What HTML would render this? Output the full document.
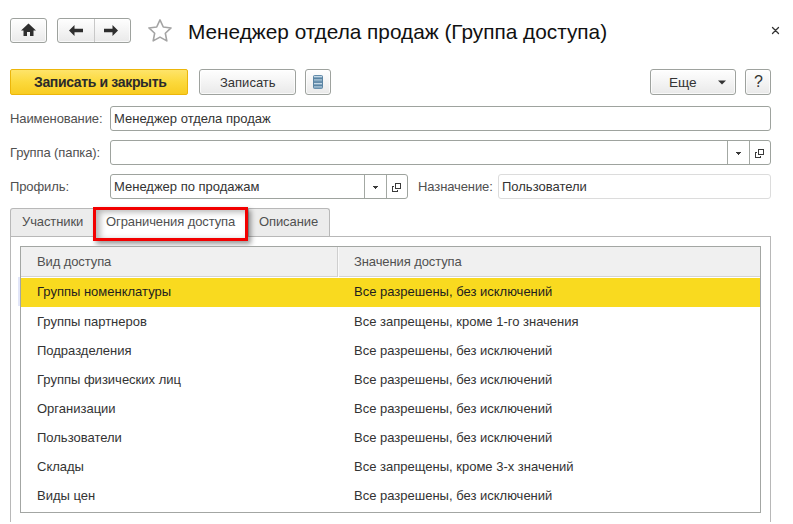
<!DOCTYPE html>
<html><head><meta charset="utf-8">
<style>
*{box-sizing:border-box;margin:0;padding:0}
html,body{width:793px;height:524px;overflow:hidden;background:#fff}
body{position:relative;font-family:"Liberation Sans",sans-serif;font-size:13px;color:#333}
.a{position:absolute}
.t{position:absolute;white-space:nowrap;line-height:15px}
.btn{position:absolute;border:1px solid #9ea29e;border-radius:3px;background:linear-gradient(#fefefe,#f4f4f4 50%,#e9e9e9);box-shadow:inset 0 0 0 1px rgba(255,255,255,.7)}
.inp{position:absolute;border:1px solid #9ea39e;border-radius:3px;background:#fff}
.lbl{color:#505050;letter-spacing:-0.1px}
.row{position:absolute;left:21px;width:739px;height:29px}
</style></head><body>

<!-- top nav -->
<div class="btn" style="left:10px;top:18px;width:37px;height:25px"></div>
<svg class="a" style="left:21px;top:23px" width="15" height="14" viewBox="0 0 15 14"><path d="M7.5 0.5 L15 7.5 L12.5 7.5 L12.5 13 L9 13 L9 9 L6 9 L6 13 L2.5 13 L2.5 7.5 L0 7.5 Z" fill="#2e2e2e"/></svg>

<div class="btn" style="left:57px;top:18px;width:74px;height:25px"></div>
<div class="a" style="left:94px;top:19px;width:1px;height:23px;background:#c8c8c8"></div>
<svg class="a" style="left:69px;top:25px" width="15" height="11" viewBox="0 0 15 11"><path d="M0 5.5 L5.5 0 L5.5 3.7 L14 3.7 L14 7.3 L5.5 7.3 L5.5 11 Z" fill="#2e2e2e"/></svg>
<svg class="a" style="left:104px;top:25px" width="15" height="11" viewBox="0 0 15 11"><path d="M14 5.5 L8.5 0 L8.5 3.7 L0 3.7 L0 7.3 L8.5 7.3 L8.5 11 Z" fill="#2e2e2e"/></svg>

<svg class="a" style="left:147px;top:19px" width="26" height="24" viewBox="0 0 26 24"><path d="M13.00 0.90 L16.29 7.97 L24.03 8.92 L18.33 14.23 L19.82 21.88 L13.00 18.10 L6.18 21.88 L7.67 14.23 L1.97 8.92 L9.71 7.97 Z" fill="none" stroke="#a4a4a4" stroke-width="1.6" stroke-linejoin="round"/></svg>

<div class="t" style="left:188px;top:20px;font-size:20.8px;line-height:24px;color:#111">Менеджер отдела продаж (Группа доступа)</div>

<svg class="a" style="left:770px;top:25px" width="11" height="11" viewBox="0 0 11 11"><path d="M2.5 2.5 L8.5 8.5 M8.5 2.5 L2.5 8.5" stroke="#333" stroke-width="1.3" stroke-linecap="round"/></svg>

<!-- command bar -->
<div class="a" style="left:10px;top:69px;width:178px;height:26px;border:1px solid #ecb60a;border-radius:2px;background:linear-gradient(#fee46a,#fcd93c 50%,#f8cc22)"></div>
<div class="t" style="left:34px;top:75px;font-weight:bold;font-size:14px;letter-spacing:-0.35px;color:#2b2b2b">Записать и закрыть</div>

<div class="btn" style="left:199px;top:69px;width:97px;height:26px"></div>
<div class="t" style="left:220px;top:75px;color:#333">Записать</div>

<div class="btn" style="left:305px;top:69px;width:26px;height:26px"></div>
<svg class="a" style="left:313px;top:75px" width="10" height="14" viewBox="0 0 10 14"><rect x="0" y="0" width="10" height="14" rx="2" fill="#5a84a3"/><rect x="1" y="0.90" width="8" height="1.1" fill="#c4d8e6"/><rect x="1" y="2.00" width="8" height="0.9" fill="#86a9c2"/><rect x="1" y="4.40" width="8" height="1.1" fill="#c4d8e6"/><rect x="1" y="5.50" width="8" height="0.9" fill="#86a9c2"/><rect x="1" y="7.90" width="8" height="1.1" fill="#c4d8e6"/><rect x="1" y="9.00" width="8" height="0.9" fill="#86a9c2"/><rect x="1" y="11.40" width="8" height="1.1" fill="#c4d8e6"/><rect x="1" y="12.50" width="8" height="0.9" fill="#86a9c2"/></svg>

<div class="btn" style="left:650px;top:69px;width:86px;height:26px"></div>
<div class="t" style="left:669px;top:75px;color:#333;font-size:13.6px">Еще</div>
<svg class="a" style="left:718px;top:80px" width="8" height="5" viewBox="0 0 8 5"><path d="M0 0.5 L8 0.5 L4 4.5 Z" fill="#333"/></svg>

<div class="btn" style="left:745px;top:69px;width:26px;height:26px"></div>
<div class="t" style="left:754px;top:74px;font-size:16px;color:#333">?</div>

<!-- fields -->
<div class="t lbl" style="left:10px;top:111px">Наименование:</div>
<div class="inp" style="left:110px;top:106px;width:661px;height:25px"></div>
<div class="t" style="left:114px;top:111px;color:#333">Менеджер отдела продаж</div>

<div class="t lbl" style="left:10px;top:145px">Группа (папка):</div>
<div class="inp" style="left:110px;top:140px;width:661px;height:25px"></div>
<div class="a" style="left:727px;top:141px;width:1px;height:23px;background:#a3a8a3"></div>
<div class="a" style="left:749px;top:141px;width:1px;height:23px;background:#a3a8a3"></div>
<svg class="a" style="left:736px;top:152px" width="5" height="3" viewBox="0 0 5 3" shape-rendering="crispEdges"><path d="M0 0h5v1h-1v1h-1v1h-1v-1h-1v-1h-1z" fill="#3a3a3a"/></svg>
<svg class="a" style="left:755px;top:149px" width="10" height="10" viewBox="0 0 10 10" shape-rendering="crispEdges"><path d="M3.5 0.5 H8.5 V5.5 H3.5 Z M2 3.5 H0.5 V8.5 H5.5 V7" fill="none" stroke="#3a3a3a" stroke-width="1"/></svg>

<div class="t lbl" style="left:10px;top:179px">Профиль:</div>
<div class="inp" style="left:110px;top:174px;width:298px;height:25px"></div>
<div class="t" style="left:114px;top:179px;color:#333">Менеджер по продажам</div>
<div class="a" style="left:364px;top:175px;width:1px;height:23px;background:#a3a8a3"></div>
<div class="a" style="left:386px;top:175px;width:1px;height:23px;background:#a3a8a3"></div>
<svg class="a" style="left:373px;top:186px" width="5" height="3" viewBox="0 0 5 3" shape-rendering="crispEdges"><path d="M0 0h5v1h-1v1h-1v1h-1v-1h-1v-1h-1z" fill="#3a3a3a"/></svg>
<svg class="a" style="left:392px;top:183px" width="10" height="10" viewBox="0 0 10 10" shape-rendering="crispEdges"><path d="M3.5 0.5 H8.5 V5.5 H3.5 Z M2 3.5 H0.5 V8.5 H5.5 V7" fill="none" stroke="#3a3a3a" stroke-width="1"/></svg>

<div class="t lbl" style="left:418px;top:179px">Назначение:</div>
<div class="inp" style="left:498px;top:174px;width:273px;height:25px;border-color:#dcdcdc"></div>
<div class="t" style="left:502px;top:179px;color:#333">Пользователи</div>

<!-- tabs -->
<div class="a" style="left:10px;top:236px;width:761px;height:286px;border:1px solid #b8b8b8;border-bottom:none"></div>
<div class="a" style="left:10px;top:208px;width:86px;height:28px;border:1px solid #b8b8b8;border-bottom:none;border-radius:3px 3px 0 0;background:#ececec"></div>
<div class="t lbl" style="left:22px;top:214px">Участники</div>
<div class="a" style="left:96px;top:208px;width:152px;height:29px;background:#fff;border-top:1px solid #b8b8b8"></div>
<div class="t lbl" style="left:106px;top:214px">Ограничения доступа</div>
<div class="a" style="left:248px;top:208px;width:82px;height:28px;border:1px solid #b8b8b8;border-bottom:none;border-radius:0 3px 0 0;background:#ececec"></div>
<div class="t lbl" style="left:259px;top:214px">Описание</div>
<div class="a" style="left:93px;top:207px;width:155px;height:34px;border:3px solid #f20000;box-shadow:3px 3px 5px rgba(0,0,0,.4), inset 4px 2px 6px rgba(0,0,0,.3)"></div>

<!-- table -->
<div class="a" style="left:20px;top:246px;width:741px;height:267px;border:1px solid #a3a6a3"></div>
<div class="a" style="left:21px;top:247px;width:739px;height:30px;background:#f0f0f0;border-bottom:1px solid #d4d4d4"></div>
<div class="a" style="left:337px;top:247px;width:1px;height:30px;background:#cfcfcf"></div><div class="a" style="left:338px;top:247px;width:1px;height:30px;background:#fafafa"></div>
<div class="t lbl" style="left:37px;top:254px">Вид доступа</div>
<div class="t lbl" style="left:354px;top:254px">Значения доступа</div>

<div class="row" style="top:278px;background:#f9da1f"></div><div class="a" style="left:18px;top:277px;width:2px;height:29px;background:#e2e6f8"></div>

<div class="t" style="left:37px;top:284px;color:#1e1e1e">Группы номенклатуры</div>
<div class="t" style="left:354px;top:284px;color:#1e1e1e">Все разрешены, без исключений</div>
<div class="t" style="left:37px;top:314px">Группы партнеров</div>
<div class="t" style="left:354px;top:314px">Все запрещены, кроме 1-го значения</div>
<div class="t" style="left:37px;top:343px">Подразделения</div>
<div class="t" style="left:354px;top:343px">Все разрешены, без исключений</div>
<div class="t" style="left:37px;top:372px">Группы физических лиц</div>
<div class="t" style="left:354px;top:372px">Все разрешены, без исключений</div>
<div class="t" style="left:37px;top:401px">Организации</div>
<div class="t" style="left:354px;top:401px">Все разрешены, без исключений</div>
<div class="t" style="left:37px;top:430px">Пользователи</div>
<div class="t" style="left:354px;top:430px">Все разрешены, без исключений</div>
<div class="t" style="left:37px;top:459px">Склады</div>
<div class="t" style="left:354px;top:459px">Все запрещены, кроме 3-х значений</div>
<div class="t" style="left:37px;top:488px">Виды цен</div>
<div class="t" style="left:354px;top:488px">Все разрешены, без исключений</div>

</body></html>
